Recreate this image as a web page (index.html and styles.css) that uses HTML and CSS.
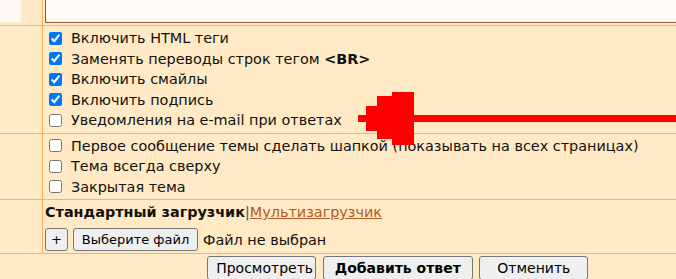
FILE: index.html
```html
<!DOCTYPE html>
<html lang="ru">
<head>
  <meta charset="UTF-8" />
  <title>Ответ в теме</title>
  <link rel="stylesheet" href="styles.css">
</head>
<body>
  <div class="page">
    <table class="post-form">
      <tr class="row-text">
        <td class="side"><div class="smile-box"></div></td>
        <td class="main"><textarea class="post-text"></textarea></td>
      </tr>
      <tr>
        <td class="side"></td>
        <td class="main opts">
          <label class="opt"><input type="checkbox" checked>Включить HTML теги</label>
          <label class="opt"><input type="checkbox" checked>Заменять переводы строк тегом&nbsp;<b>&lt;BR&gt;</b></label>
          <label class="opt"><input type="checkbox" checked>Включить смайлы</label>
          <label class="opt"><input type="checkbox" checked>Включить подпись</label>
          <label class="opt"><input type="checkbox">Уведомления на e-mail при ответах</label>
        </td>
      </tr>
      <tr>
        <td class="side"></td>
        <td class="main opts">
          <label class="opt"><input type="checkbox">Первое сообщение темы сделать шапкой (показывать на всех страницах)</label>
          <label class="opt"><input type="checkbox">Тема всегда сверху</label>
          <label class="opt"><input type="checkbox">Закрытая тема</label>
        </td>
      </tr>
      <tr>
        <td class="side"></td>
        <td class="main upload">
          <div class="loader-tabs"><b>Стандартный загрузчик</b><span class="sep">|</span><a href="#">Мультизагрузчик</a></div>
          <div class="file-row">
            <button type="button" class="btn small">+</button>
            <button type="button" class="btn pick">Выберите файл</button>
            <span class="file-name">Файл не выбран</span>
          </div>
        </td>
      </tr>
      <tr>
        <td colspan="2" class="actions">
          <button type="button" class="btn wide">Просмотреть</button>
          <button type="button" class="btn wide submit">Добавить ответ</button>
          <button type="button" class="btn wide">Отменить</button>
        </td>
      </tr>
    </table>

    <svg class="pointer" width="318" height="53" viewBox="0 0 318 53" shape-rendering="crispEdges">
      <rect x="0" y="23" width="318" height="7" fill="#ff0000"/>
      <rect x="8" y="14" width="11" height="25" fill="#ff0000"/>
      <rect x="19" y="4" width="15" height="43" fill="#ff0000"/>
      <rect x="34" y="0" width="22" height="53" fill="#ff0000"/>
    </svg>
  </div>
</body>
</html>
```

FILE: styles.css
```css
html, body {
  margin: 0;
  overflow: hidden;
}

body {
  background-color: #ffeac5;
  font-family: 'DejaVu Sans', Verdana, sans-serif;
  font-size: 14.4px;
  color: #111;
}

.page {
  position: relative;
}

.post-form {
  width: 796px;
  border-collapse: collapse;
}

.post-form td {
  border: 1px solid #fbb35a;
  padding: 2px;
  vertical-align: top;
}

.post-form td:first-child {
  border-left: none;
}

.post-form tr:first-child td {
  border-top: none;
}

.side {
  width: 38px;
}

.smile-box {
  width: 22px;
  height: 22px;
  margin: -2px 0 0 -2px;
  background-color: #fff8f5;
  border-right: 1px solid #eee;
  box-sizing: border-box;
}

.row-text .main {
  padding-top: 0;
  padding-bottom: 2px;
}

.post-text {
  display: block;
  width: 100%;
  height: 23px;
  margin: 0;
  box-sizing: border-box;
  border: 1px solid #a0522d;
  border-top: none;
  background-color: #fffaf8;
  resize: none;
}

.opt {
  display: flex;
  align-items: center;
  height: 20.5px;
  white-space: nowrap;
}

.opt input {
  width: 13px;
  height: 13px;
  margin: 0 9px 0 4px;
}

.opt b {
  font-weight: bold;
}

.loader-tabs {
  height: 20px;
  line-height: 20px;
}

.sep {
  color: #555;
}

.loader-tabs a {
  color: #b35a22;
}

.file-row {
  display: flex;
  align-items: center;
  margin-top: 6px;
}

.btn {
  font-family: 'DejaVu Sans', Verdana, sans-serif;
  font-size: 13px;
  color: #000;
  background-color: #efefef;
  border: 1px solid #767676;
  border-radius: 3px;
  height: 23px;
  padding: 0 8px;
}

.btn.small {
  width: 23px;
  padding: 0;
  margin-right: 5px;
}

.btn.pick {
  width: 125px;
  padding: 0;
}

.file-name {
  margin-left: 5px;
}

.actions {
  text-align: center;
  padding-top: 2px;
}

.post-form .actions {
  border: none;
}

.btn.wide {
  width: 109px;
  height: 24px;
  font-size: 14px;
  margin: 0 1px;
}

.btn.submit {
  width: 150px;
  font-weight: bold;
}

.pointer {
  position: absolute;
  left: 358px;
  top: 92px;
}
```
